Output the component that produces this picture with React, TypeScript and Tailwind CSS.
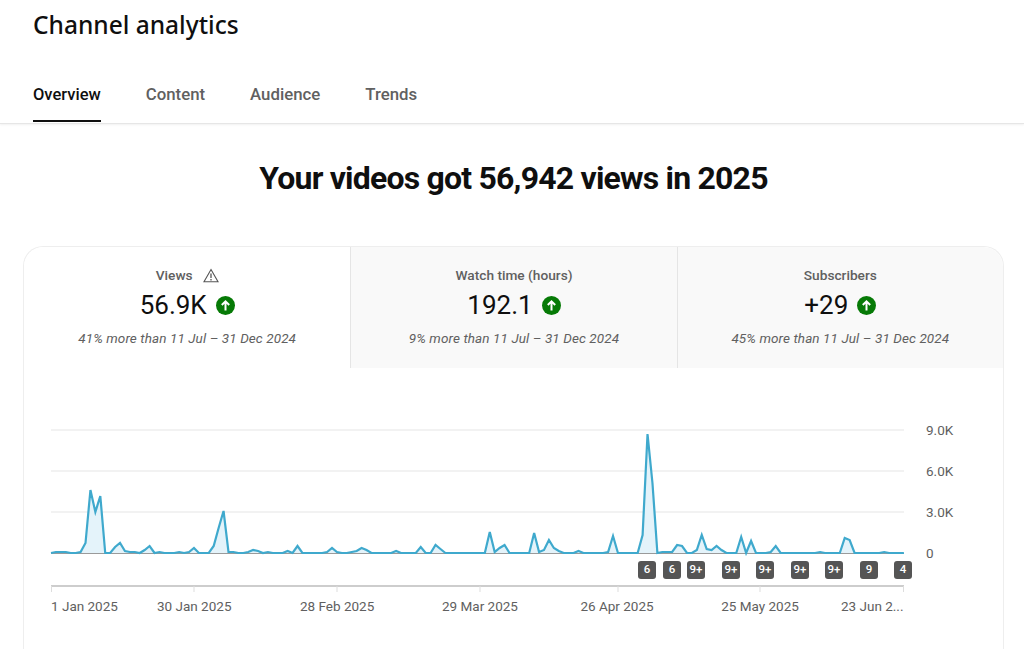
const heights: number[] = [
  0, 1, 1, 1, 0, 0, 1, 10, 63, 41, 57, 0, 0, 6, 10, 2, 1, 1, 0, 3,
  7, 0, 1, 0, 0, 0, 1, 0, 1, 5, 0, 0, 0, 7, 25, 42, 1, 1, 0, 0,
  1, 3, 2, 0, 1, 0, 0, 0, 2, 0, 7, 0, 0, 0, 0, 0, 1, 5, 1, 0,
  0, 1, 2, 5, 3, 0, 0, 0, 0, 0, 2, 0, 0, 0, 0, 6, 0, 0, 8, 4,
  0, 0, 0, 0, 0, 0, 0, 0, 0, 21, 1, 5, 8, 0, 0, 0, 0, 0, 20, 1,
  3, 13, 5, 2, 0, 0, 0, 2, 0, 0, 0, 0, 0, 1, 17, 0, 0, 0, 0, 0,
  18, 119, 70, 0, 1, 1, 1, 8, 7, 0, 0, 3, 18, 4, 3, 7, 3, 0, 0, 0,
  16, 0, 12, 0, 0, 0, 1, 7, 0, 0, 0, 0, 0, 0, 0, 0, 1, 0, 0, 0,
  0, 15, 13, 0, 0, 0, 0, 0, 0, 1, 0, 0, 0, 0,
];

const BASE = 124;
const pts = heights.map((h, i) => `${(i * 4.93).toFixed(2)},${BASE - h}`).join(" ");
const area = `0,${BASE} ${pts} ${((heights.length - 1) * 4.93).toFixed(2)},${BASE}`;

const tiles = [
  { label: "Views", value: "56.9K", note: "41% more than 11 Jul – 31 Dec 2024", warn: true, active: true },
  { label: "Watch time (hours)", value: "192.1", note: "9% more than 11 Jul – 31 Dec 2024", warn: false, active: false },
  { label: "Subscribers", value: "+29", note: "45% more than 11 Jul – 31 Dec 2024", warn: false, active: false },
];

const badges = [
  { t: "6", c: "ml-[587px]" },
  { t: "6", c: "ml-[7px]" },
  { t: "9+", c: "ml-[6px]" },
  { t: "9+", c: "ml-[17px]" },
  { t: "9+", c: "ml-[16px]" },
  { t: "9+", c: "ml-[17px]" },
  { t: "9+", c: "ml-[16px]" },
  { t: "9", c: "ml-[17px]" },
  { t: "4", c: "ml-[16px]" },
];

const dates = [
  { t: "1 Jan 2025", c: "w-[106px] text-left" },
  { t: "30 Jan 2025", c: "w-[74px] text-center" },
  { t: "28 Feb 2025", c: "w-[74px] ml-[69px] text-center" },
  { t: "29 Mar 2025", c: "w-[76px] ml-[68px] text-center" },
  { t: "26 Apr 2025", c: "w-[74px] ml-[62px] text-center" },
  { t: "25 May 2025", c: "w-[78px] ml-[67px] text-center" },
  { t: "23 Jun 2...", c: "w-[62px] ml-[42px] text-right" },
];

function UpBadge() {
  return (
    <svg width="19" height="19" viewBox="0 0 19 19" className="shrink-0">
      <circle cx="9.5" cy="9.5" r="9.5" fill="#067a06" />
      <path d="M9.5 14.5V5.5M5.8 9l3.7-3.7L13.2 9" fill="none" stroke="#fff" strokeWidth="2" />
    </svg>
  );
}

function Warn() {
  return (
    <svg width="16" height="15" viewBox="0 0 16 15" className="shrink-0">
      <path d="M8 1.5 15 13.8H1Z" fill="none" stroke="#555555" strokeWidth="1.1" />
      <path d="M8 5.5v4.6M8 11v1.4" fill="none" stroke="#555555" strokeWidth="1.3" />
    </svg>
  );
}

export default function App() {
  return (
    <div className="flex h-[649px] w-[1024px] flex-col overflow-hidden bg-white font-['Roboto',sans-serif] text-[#0f0f0f]">
      <header className="flex h-[124px] shrink-0 flex-col border-b border-[#e6e6e6] shadow-[0_1px_2px_rgba(0,0,0,0.06)] px-[33px]">
        <h2 className="mt-[7px] h-[36px] font-['Noto_Sans',sans-serif] text-[24.5px] font-medium leading-[36px] text-[#0f0f0f]">
          Channel analytics
        </h2>
        <nav className="mt-[34px] flex gap-[45px] text-[16.8px] font-medium leading-[24px] text-[#606060]">
          <div className="flex h-[45px] flex-col items-stretch justify-start border-b-2 border-[#0f0f0f] pt-[6px] text-[16.5px] text-[#0f0f0f]">Overview</div>
          <div className="pt-[5px]">Content</div>
          <div className="pt-[5px]">Audience</div>
          <div className="pt-[5px]">Trends</div>
        </nav>
      </header>

      <h1 className="mt-[31px] shrink-0 pl-[3px] text-center text-[32px] font-bold leading-[46px] tracking-[-0.8px] text-[#0f0f0f]">
        Your videos got 56,942 views in 2025
      </h1>

      <section className="ml-[23px] mt-[45px] w-[981px] flex-1 rounded-t-[20px] border border-b-0 border-[#eeeeee]">
        <div className="grid h-[121px] grid-cols-3 overflow-hidden rounded-t-[20px]">
          {tiles.map((t) => (
            <div
              key={t.label}
              className={
                t.active
                  ? "flex flex-col items-center bg-white pt-[18px]"
                  : "flex flex-col items-center border-l border-[#e5e5e5] bg-[#f9f9f9] pt-[18px]"
              }
            >
              <div className="flex h-[20px] items-center gap-[10px] text-[13.7px] font-medium leading-[20px] text-[#606060]">
                <span>{t.label}</span>
                {t.warn && <Warn />}
              </div>
              <div className="mt-[2px] flex h-[36px] items-center gap-[9px]">
                <span className="text-[26px] leading-[36px] text-[#0f0f0f]">{t.value}</span>
                <UpBadge />
              </div>
              <p className="mt-[5px] text-[13.5px] italic leading-[20px] tracking-[0.1px] text-[#606060]">{t.note}</p>
            </div>
          ))}
        </div>

        <div className="ml-[27px] mt-[61px] flex items-start">
          <div className="w-[853px]">
            <svg width="853" height="126" viewBox="0 0 853 126" className="block overflow-visible">
              {[1, 42, 83].map((y) => (
                <line key={y} x1="0" x2="853" y1={y} y2={y} stroke="#eeeeee" strokeWidth="1.5" />
              ))}
              <polygon points={area} fill="#e4f3fa" />
              <line x1="0" x2="853" y1={BASE + 0.5} y2={BASE + 0.5} stroke="#9a9a9a" strokeWidth="1" />
              <polyline points={pts} fill="none" stroke="#3fa9cd" strokeWidth="2.2" strokeLinejoin="miter" />
            </svg>

            <div className="mt-[6px] flex">
              {badges.map((b, i) => (
                <span
                  key={i}
                  className={`${b.c} flex h-[18px] w-[18px] shrink-0 items-center justify-center rounded-[3px] bg-[#555555] text-[11.5px] font-medium leading-none text-white`}
                >
                  {b.t}
                </span>
              ))}
            </div>

            <svg width="853" height="8" viewBox="0 0 853 8" className="mt-[6px] block">
              <line x1="0" x2="853" y1="1" y2="1" stroke="#bdbdbd" strokeWidth="1.5" />
              {[0.5, 143, 286, 429, 567, 709, 852.5].map((x) => (
                <line key={x} x1={x} x2={x} y1="1" y2="7" stroke="#dddddd" strokeWidth="1" />
              ))}
            </svg>

            <div className="mt-[3px] flex whitespace-nowrap text-[13.5px] leading-[20px] text-[#606060]">
              {dates.map((d) => (
                <span key={d.t} className={`${d.c} shrink-0`}>{d.t}</span>
              ))}
            </div>
          </div>

          <div className="-mt-[9px] ml-[22px] flex flex-col gap-[21px] text-[13.5px] leading-[20px] text-[#606060]">
            <span>9.0K</span>
            <span>6.0K</span>
            <span>3.0K</span>
            <span>0</span>
          </div>
        </div>
      </section>
    </div>
  );
}
